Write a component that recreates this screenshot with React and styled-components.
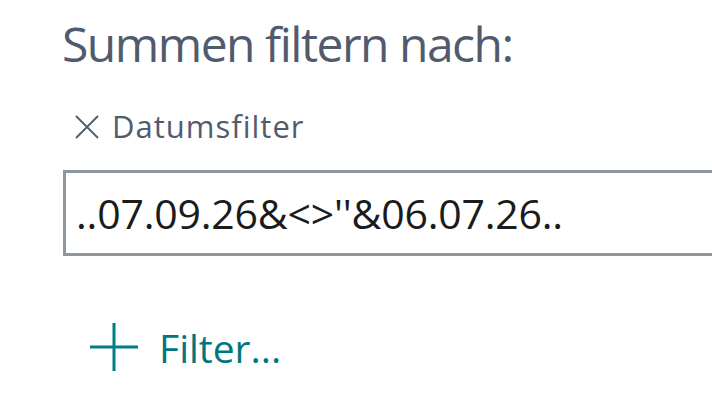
import React from "react";
import styled, { createGlobalStyle } from "styled-components";

const GlobalStyle = createGlobalStyle`
  html, body {
    margin: 0;
    padding: 0;
    background: #ffffff;
    overflow: hidden;
  }
  body {
    font-family: "Open Sans", "Noto Sans", sans-serif;
  }
`;

const Pane = styled.section`
  width: 712px;
  height: 420px;
  box-sizing: border-box;
  padding: 20px 0 0 63px;
  display: flex;
  flex-direction: column;
  overflow: hidden;
`;

const Title = styled.h2`
  margin: 0 0 0 -1px;
  font-size: 48px;
  line-height: 48px;
  font-weight: 400;
  letter-spacing: -1.5px;
  color: #505c6d;
  white-space: nowrap;
`;

const FieldHeader = styled.div`
  display: flex;
  align-items: center;
  gap: 13px;
  margin-top: 43px;
  padding-left: 12px;
  height: 31px;
`;

const RemoveButton = styled.button`
  display: flex;
  padding: 0;
  border: 0;
  background: none;
  color: #505c6d;
  cursor: pointer;
`;

const FieldLabel = styled.span`
  font-size: 31px;
  line-height: 31px;
  letter-spacing: 1px;
  color: #505c6d;
`;

const FilterInput = styled.input`
  margin-top: 28px;
  width: 700px;
  height: 86px;
  box-sizing: border-box;
  border: 3px solid #8f969e;
  border-radius: 0;
  padding: 0 0 0 10px;
  font-family: "Open Sans", "Noto Sans", sans-serif;
  font-size: 41px;
  line-height: 80px;
  letter-spacing: -0.2px;
  color: #1b1b1b;
  background: #ffffff;
  outline: none;
`;

const AddFilter = styled.button`
  display: flex;
  align-items: center;
  gap: 21px;
  margin: 66px 0 0 27px;
  padding: 0;
  border: 0;
  background: none;
  align-self: flex-start;
  cursor: pointer;
`;

const AddLabel = styled.span`
  font-family: "Open Sans", "Noto Sans", sans-serif;
  font-size: 39px;
  line-height: 48px;
  letter-spacing: 0;
  color: #00777f;
  padding-top: 2px;
`;

const CloseIcon = () => (
  <svg width="24" height="24" viewBox="0 0 24 24" fill="none">
    <path d="M1 1 L23 23 M23 1 L1 23" stroke="currentColor" strokeWidth="1.8" />
  </svg>
);

const PlusIcon = () => (
  <svg width="48" height="48" viewBox="0 0 48 48" fill="none">
    <path d="M24 0 V48 M0 24 H48" stroke="#007e87" strokeWidth="3" />
  </svg>
);

export default function App() {
  return (
    <>
      <GlobalStyle />
      <Pane>
        <Title>Summen filtern nach:</Title>
        <FieldHeader>
          <RemoveButton aria-label="Filter entfernen">
            <CloseIcon />
          </RemoveButton>
          <FieldLabel>Datumsfilter</FieldLabel>
        </FieldHeader>
        <FilterInput defaultValue="..07.09.26&<>''&06.07.26.." />
        <AddFilter>
          <PlusIcon />
          <AddLabel>Filter...</AddLabel>
        </AddFilter>
      </Pane>
    </>
  );
}
